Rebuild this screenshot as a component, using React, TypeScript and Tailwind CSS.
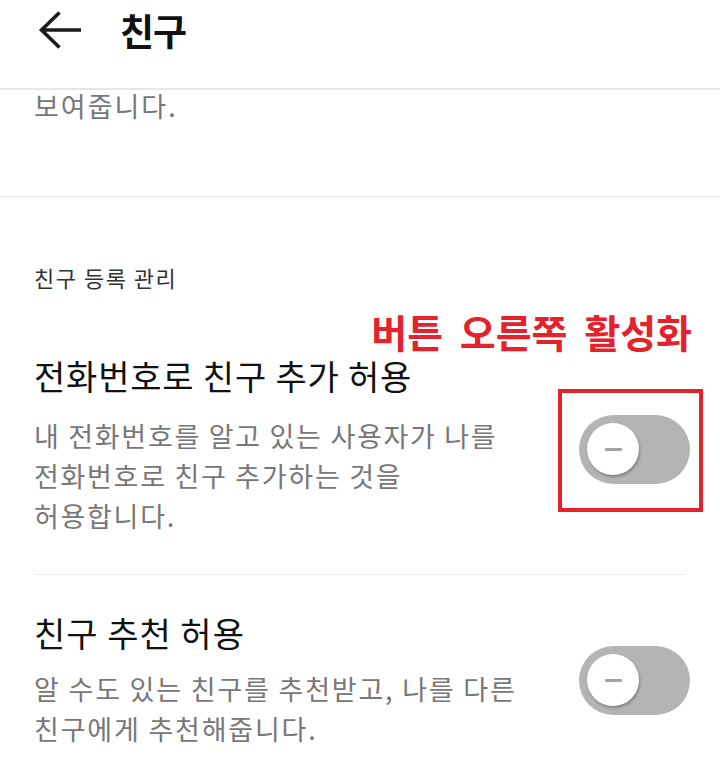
import React from 'react';

const Toggle: React.FC = () => (
  <div className="w-[111px] h-[69px] rounded-full bg-[#b4b4b4] flex items-center pl-[8px] shrink-0">
    <div className="w-[52px] h-[52px] rounded-full bg-white shadow-[1px_2px_3px_rgba(0,0,0,0.28)] flex items-center justify-center">
      <div className="w-[17px] h-[3px] bg-[#a2a2a2] rounded-[1px]" />
    </div>
  </div>
);

export default function App() {
  return (
    <div className="w-[720px] h-[758px] bg-white overflow-hidden font-['Noto_Sans_CJK_KR','Noto_Sans',sans-serif]">
      {/* Top bar */}
      <header className="h-[90px] border-b-2 border-[#e6e6e6] flex items-start pt-[8px] pl-[38px] gap-[38px]">
        <svg width="44" height="40" viewBox="0 0 44 40" className="mt-[2px]" fill="none" stroke="#1a1a1a" strokeWidth="3.6">
          <path d="M3 20 H43" />
          <path d="M21.5 2.5 L3.5 20 L21.5 37.5" />
        </svg>
        <h1 className="text-[37px] leading-[44px] font-bold text-[#111] tracking-[-1px]">친구</h1>
      </header>

      {/* Scrolled content */}
      <div className="h-[107px] border-b border-[#e2e2e2] px-[34px]">
        <p className="text-[27px] leading-[32px] text-[#777] tracking-[2px]">보여줍니다.</p>
      </div>

      <div className="px-[34px]">
        <p className="pt-[64px] text-[22px] leading-[32px] text-[#333] tracking-[1.5px]">친구 등록 관리</p>

        <div className="flex items-center justify-between pt-[61px] pb-[38px] border-b border-[#ececec]">
          <div>
            <p className="text-[34px] leading-[44px] text-[#111] tracking-[0.8px]">전화번호로 친구 추가 허용</p>
            <p className="mt-[18px] text-[27px] leading-[40px] text-[#777] tracking-[1.7px]">
              내 전화번호를 알고 있는 사용자가 나를
              <br />
              전화번호로 친구 추가하는 것을
              <br />
              허용합니다.
            </p>
          </div>
          <div className="relative mr-[-4px] mt-[8px]">
            <Toggle />
            {/* annotation */}
            <div className="absolute -left-[21px] -right-[13px] -top-[26px] -bottom-[28px] border-4 border-[#e3222c]" />
            <span className="absolute right-[-2px] top-[-108px] whitespace-nowrap text-[39px] leading-[48px] font-bold text-[#e3222c] [word-spacing:8px]">
              버튼 오른쪽 활성화
            </span>
          </div>
        </div>

        <div className="flex items-center justify-between pt-[36px]">
          <div>
            <p className="text-[34px] leading-[44px] text-[#111] tracking-[1px]">친구 추천 허용</p>
            <p className="mt-[14px] text-[27px] leading-[40px] text-[#777] tracking-[1.8px]">
              알 수도 있는 친구를 추천받고, 나를 다른
              <br />
              친구에게 추천해줍니다.
            </p>
          </div>
          <div className="mr-[-4px]">
            <Toggle />
          </div>
        </div>
      </div>
    </div>
  );
}
